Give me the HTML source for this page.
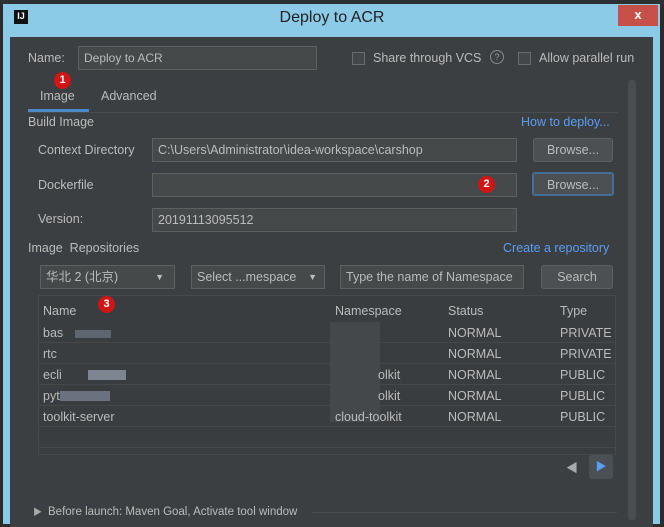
<!DOCTYPE html>
<html><head><meta charset="utf-8"><style>
*{box-sizing:border-box;margin:0;padding:0}
body{width:664px;height:520px;overflow:hidden;background:#2b2b2b;font-family:"Liberation Sans","Noto Sans CJK SC",sans-serif;font-size:12.5px;color:#bbbbbb;position:relative}
.a{position:absolute;white-space:nowrap}
.frame{left:3px;top:4px;width:657px;height:520px;background:#8ccbe8}
.panel{left:10px;top:37px;width:643px;height:490px;background:#3c3f41}
.inp{background:#45494a;border:1px solid #5e6060;height:24px;padding:0 5px;line-height:22px;color:#bbb}
.btn{background:#4c5052;border:1px solid #5e6060;border-radius:3px;height:24px;text-align:center;line-height:22px;color:#bbb}
.badge{width:17px;height:17px;border-radius:50%;background:#d01515;color:#fff;font-size:11px;text-align:center;line-height:17px;font-weight:bold}
.chk{width:13px;height:13px;border:1px solid #6b6b6b;background:#43474a}
.link{color:#589df6}
.row{left:38px;width:577px;height:21px;border-bottom:1px solid #45494a}
</style></head><body>
<div class="a" style="left:0;top:0;width:664px;height:5px;background:#2e3134"></div>
<div class="a frame"></div>
<div class="a" style="left:14px;top:10px;width:14px;height:14px;background:#111;color:#fff;font-size:9px;font-weight:bold;text-align:center;line-height:12px">IJ</div>
<div class="a" style="left:0;width:664px;top:9px;text-align:center;font-size:16px;color:#222">Deploy to ACR</div>
<div class="a" style="left:618px;top:5px;width:40px;height:21px;background:#c7504a;color:#fff;text-align:center;font-weight:bold;font-size:13px;line-height:20px">x</div>
<div class="a panel"></div>
<div class="a" style="left:628px;top:80px;width:8px;height:440px;background:#4a4d50;border-radius:3px"></div>

<div class="a" style="left:28px;top:51px">Name:</div>
<div class="a inp" style="left:78px;top:46px;width:239px;font-size:12px">Deploy to ACR</div>
<div class="a chk" style="left:352px;top:52px"></div>
<div class="a" style="left:373px;top:51px">Share through VCS</div>
<div class="a" style="left:490px;top:50px;width:14px;height:14px;border:1px solid #888;border-radius:50%;font-size:9px;text-align:center;line-height:12px;color:#999">?</div>
<div class="a chk" style="left:518px;top:52px"></div>
<div class="a" style="left:539px;top:51px">Allow parallel run</div>

<div class="a badge" style="left:54px;top:72px">1</div>
<div class="a" style="left:40px;top:89px">Image</div>
<div class="a" style="left:101px;top:89px">Advanced</div>
<div class="a" style="left:28px;top:109px;width:61px;height:3px;background:#4a88c7"></div>
<div class="a" style="left:28px;top:112px;width:590px;height:1px;background:#4a4d50"></div>

<div class="a" style="left:28px;top:115px">Build Image</div>
<div class="a link" style="left:521px;top:115px">How to deploy...</div>
<div class="a" style="left:38px;top:143px">Context Directory</div>
<div class="a inp" style="left:152px;top:138px;width:365px">C:\Users\Administrator\idea-workspace\carshop</div>
<div class="a btn" style="left:533px;top:138px;width:80px">Browse...</div>
<div class="a" style="left:38px;top:178px">Dockerfile</div>
<div class="a inp" style="left:152px;top:173px;width:365px"></div>
<div class="a badge" style="left:478px;top:176px">2</div>
<div class="a btn" style="left:532px;top:172px;width:82px;border:2px solid #466d94">Browse...</div>
<div class="a" style="left:38px;top:212px">Version:</div>
<div class="a inp" style="left:152px;top:208px;width:365px">20191113095512</div>

<div class="a" style="left:28px;top:241px">Image&nbsp; Repositories</div>
<div class="a link" style="left:503px;top:241px">Create a repository</div>
<div class="a inp" style="left:40px;top:265px;width:135px">华北 2 (北京)<span style="position:absolute;right:10px;font-size:9px;top:0">▼</span></div>
<div class="a inp" style="left:191px;top:265px;width:134px">Select ...mespace<span style="position:absolute;right:7px;font-size:9px;top:0">▼</span></div>
<div class="a inp" style="left:340px;top:265px;width:184px">Type the name of Namespace</div>
<div class="a btn" style="left:541px;top:265px;width:72px">Search</div>

<div class="a" style="left:38px;top:295px;width:578px;height:160px;background:#3a3d3f;border:1px solid #464a4c"></div>
<div class="a" style="left:43px;top:304px">Name</div>
<div class="a badge" style="left:98px;top:296px">3</div>
<div class="a" style="left:335px;top:304px">Namespace</div>
<div class="a" style="left:448px;top:304px">Status</div>
<div class="a" style="left:560px;top:304px">Type</div>
<div class="a row" style="top:322px"></div><div class="a row" style="top:343px"></div><div class="a row" style="top:364px"></div><div class="a row" style="top:385px"></div><div class="a row" style="top:406px"></div><div class="a row" style="top:427px"></div>
<div class="a" style="left:43px;top:326px">bas</div><div class="a" style="left:75px;top:330px;width:36px;height:8px;background:#5d6670"></div>
<div class="a" style="left:43px;top:347px">rtc</div>
<div class="a" style="left:43px;top:368px">ecli</div><div class="a" style="left:88px;top:370px;width:38px;height:10px;background:#7d8590"></div>
<div class="a" style="left:43px;top:389px">pyt</div><div class="a" style="left:60px;top:391px;width:50px;height:10px;background:#6a7280"></div>
<div class="a" style="left:43px;top:410px">toolkit-server</div>
<div class="a" style="left:330px;top:322px;width:50px;height:100px;background:#45484b"></div>
<div class="a" style="left:335px;top:410px">cloud-toolkit</div>
<div class="a" style="left:378px;top:368px">olkit</div><div class="a" style="left:378px;top:389px">olkit</div>
<div class="a" style="left:448px;top:326px">NORMAL</div><div class="a" style="left:448px;top:347px">NORMAL</div><div class="a" style="left:448px;top:368px">NORMAL</div><div class="a" style="left:448px;top:389px">NORMAL</div><div class="a" style="left:448px;top:410px">NORMAL</div>
<div class="a" style="left:560px;top:326px">PRIVATE</div><div class="a" style="left:560px;top:347px">PRIVATE</div><div class="a" style="left:560px;top:368px">PUBLIC</div><div class="a" style="left:560px;top:389px">PUBLIC</div><div class="a" style="left:560px;top:410px">PUBLIC</div>

<div class="a" style="left:566px;top:459px;font-size:12px;color:#aaa">◀</div>
<div class="a" style="left:589px;top:455px;width:24px;height:24px;background:#4b5055;border-radius:3px;color:#589df6;font-size:11px;text-align:center;line-height:24px">▶</div>

<div class="a" style="left:33px;top:505px;font-size:9px;color:#aaa">▶</div>
<div class="a" style="left:48px;top:506px;font-size:11.5px">Before launch: Maven Goal, Activate tool window</div>
<div class="a" style="left:312px;top:512px;width:305px;height:1px;background:#4a4d50"></div>
</body></html>
